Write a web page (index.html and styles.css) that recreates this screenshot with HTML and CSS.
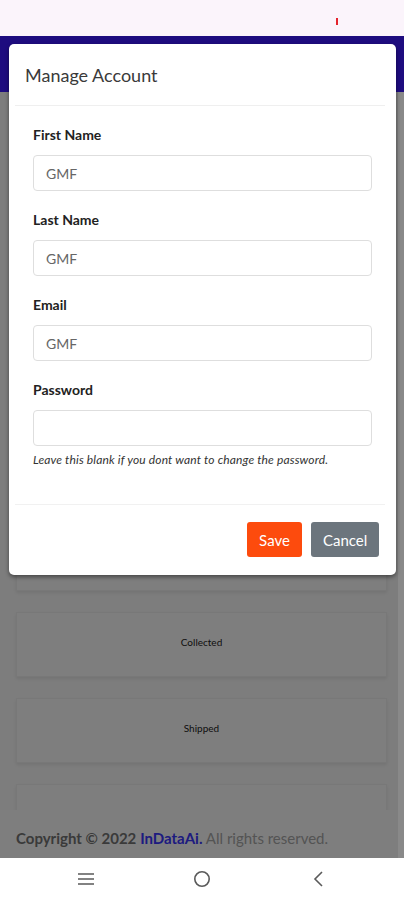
FILE: index.html
```html
<!DOCTYPE html>
<html lang="en">
<head>
<meta charset="utf-8">
<title>Manage Account</title>
<link rel="stylesheet" href="styles.css">
</head>
<body>
<div class="phone">
  <div class="statusbar"><span class="rec"></span></div>
  <div class="app">
    <div class="page">
      <header class="topbar"></header>
      <main class="cards">
        <div class="card"></div>
        <div class="card"></div>
        <div class="card"></div>
        <div class="card"></div>
        <div class="card"></div>
        <div class="card"></div>
        <div class="card">Collected</div>
        <div class="card">Shipped</div>
        <div class="card">In Transit</div>
      </main>
      <footer class="copyright"><p class="copyright-text"><b>Copyright © 2022</b> <b class="brand">InDataAi.</b> All rights reserved.</p></footer>
    </div>
    <div class="overlay"></div>
    <div class="scrolltrack"></div>
    <div class="modal">
      <div class="modal-header"><h2 class="modal-title">Manage Account</h2></div>
      <form class="modal-body">
        <div class="field">
          <label class="field-label">First Name</label>
          <input class="field-input" type="text" value="GMF">
        </div>
        <div class="field">
          <label class="field-label">Last Name</label>
          <input class="field-input" type="text" value="GMF">
        </div>
        <div class="field">
          <label class="field-label">Email</label>
          <input class="field-input" type="text" value="GMF">
        </div>
        <div class="field">
          <label class="field-label">Password</label>
          <input class="field-input" type="password" value="">
          <p class="field-help">Leave this blank if you dont want to change the password.</p>
        </div>
      </form>
      <div class="modal-footer">
        <button class="btn btn-save" type="button">Save</button>
        <button class="btn btn-cancel" type="button">Cancel</button>
      </div>
    </div>
  </div>
  <nav class="navbar">
    <svg class="nav-icon" width="20" height="20" viewBox="0 0 20 20"><path d="M2 5h16M2 10h16M2 15h16" stroke="#5a5a5a" stroke-width="1.6" fill="none"/></svg>
    <svg class="nav-icon" width="20" height="20" viewBox="0 0 20 20"><circle cx="10" cy="10" r="7.2" stroke="#5a5a5a" stroke-width="1.6" fill="none"/></svg>
    <svg class="nav-icon" width="20" height="20" viewBox="0 0 20 20"><path d="M14 3l-7 7 7 7" stroke="#5a5a5a" stroke-width="1.6" fill="none"/></svg>
  </nav>
</div>
</body>
</html>
```
FILE: styles.css
```css
* { box-sizing: border-box; }
html, body { margin: 0; padding: 0; }
body {
  font-family: Lato, "Open Sans", sans-serif;
  background: #fff;
}
.phone {
  width: 404px;
  height: 900px;
  display: flex;
  flex-direction: column;
  overflow: hidden;
}
.statusbar {
  height: 36px;
  flex: none;
  background: #fbf4fb;
  display: flex;
  align-items: center;
  justify-content: flex-end;
  padding-right: 66px;
}
.rec {
  width: 2px;
  height: 7px;
  margin-top: 6px;
  background: #e4232c;
}
.app {
  position: relative;
  flex: 1;
  min-height: 0;
}
.page {
  height: 100%;
  display: flex;
  flex-direction: column;
  background: #fafafa;
}
.topbar {
  height: 56px;
  flex: none;
  background: #3c18ff;
}
.cards {
  flex: 1;
  min-height: 0;
  overflow: hidden;
  padding: 4px 17px 0 16px;
  display: flex;
  flex-direction: column;
  gap: 21px;
}
.card {
  flex: none;
  height: 65px;
  padding-bottom: 5px;
  background: #fdfdfd;
  border: 1px solid #f1f1f1;
  box-shadow: 0 2px 3px rgba(0,0,0,0.08);
  display: flex;
  align-items: center;
  justify-content: center;
  font-size: 10px;
  color: #222;
}
.copyright {
  height: 48px;
  flex: none;
  background: #fdfdfd;
  display: flex;
  align-items: center;
  padding: 7px 0 0 16px;
}
.copyright-text {
  margin: 0;
  font-size: 15px;
  color: #a8a8a8;
}
.copyright-text b { color: #747474; font-weight: 700; }
.copyright-text .brand { color: #3a36ff; }
.overlay {
  position: absolute;
  inset: 0;
  background: rgba(0,0,0,0.5);
}
.scrolltrack {
  position: absolute;
  right: 0;
  top: 56px;
  bottom: 0;
  width: 6px;
  background: #898989;
}
.modal {
  position: absolute;
  top: 8px;
  left: 9px;
  width: 387px;
  background: #fff;
  border-radius: 5px;
  box-shadow: 0 2px 4px rgba(0,0,0,0.45);
}
.modal-header {
  height: 62px;
  margin: 0 11px 0 6px;
  padding: 0 10px;
  display: flex;
  align-items: center;
  border-bottom: 1px solid #efefef;
}
.modal-title {
  margin: 0;
  font-size: 18px;
  font-weight: 400;
  color: #3a3a3a;
}
.modal-body {
  margin: 0;
  padding: 19px 24px 17px;
}
.field { margin-bottom: 19px; }
.field-label {
  display: block;
  font-size: 14px;
  line-height: 20px;
  font-weight: 700;
  color: #222;
  margin-bottom: 10px;
}
.field-input {
  display: block;
  width: 100%;
  height: 36px;
  margin: 0;
  padding: 0 12px;
  border: 1px solid #dedede;
  border-radius: 4px;
  font-family: Lato, "Open Sans", sans-serif;
  font-size: 14px;
  color: #666;
  background: #fff;
  outline: none;
}
.field-help {
  margin: 6px 0 0;
  font-size: 12px;
  line-height: 16px;
  letter-spacing: 0.15px;
  font-style: italic;
  color: #333;
}
.modal-footer {
  margin: 0 11px 0 6px;
  padding: 17px 6px 18px;
  border-top: 1px solid #f1f1f1;
  display: flex;
  justify-content: flex-end;
  gap: 9px;
}
.btn {
  height: 35px;
  border: none;
  border-radius: 3px;
  color: #fff;
  font-family: Lato, "Open Sans", sans-serif;
  font-size: 15px;
  padding: 0 12px;
}
.btn-save { background: #fd4b0d; width: 55px; }
.btn-cancel { background: #6c757d; width: 68px; }
.navbar {
  height: 42px;
  flex: none;
  background: #fff;
  display: flex;
  align-items: center;
  justify-content: space-between;
  padding: 0 76px 0 76px;
}
.nav-icon { display: block; }
```
